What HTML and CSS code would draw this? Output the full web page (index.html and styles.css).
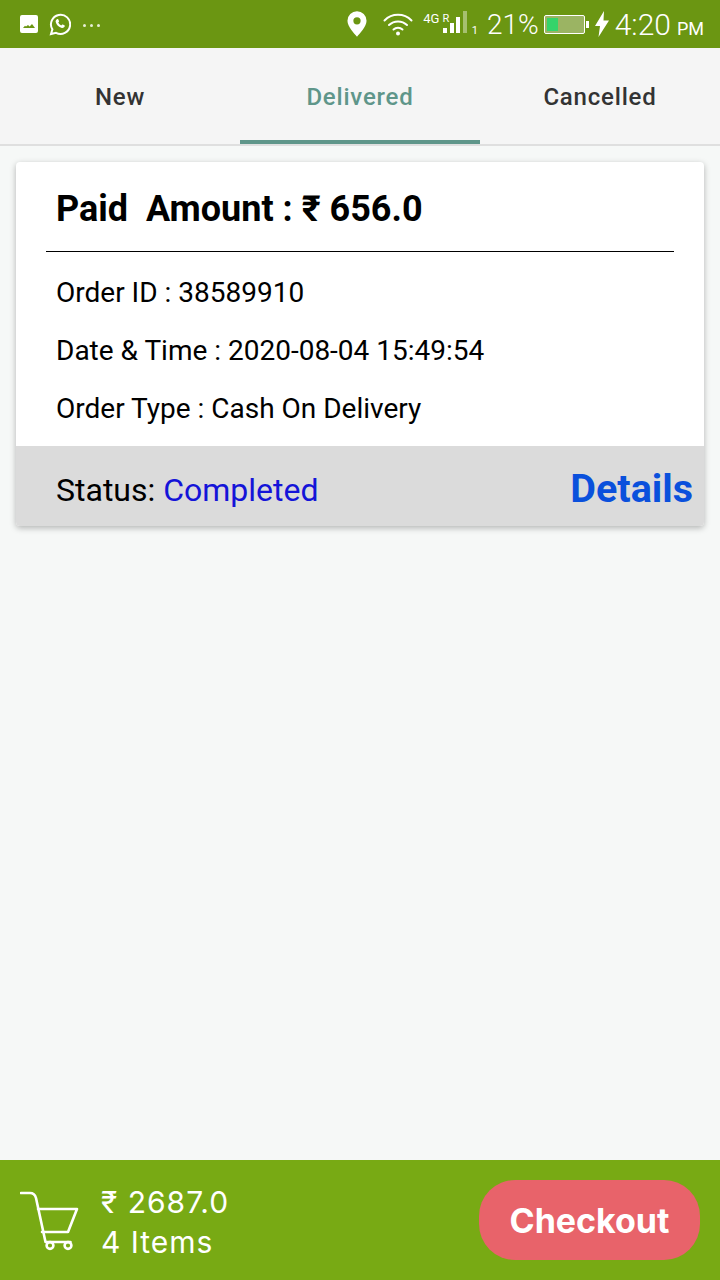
FILE: index.html
```html
<!DOCTYPE html>
<html lang="en">
<head>
  <meta charset="UTF-8" />
  <meta name="viewport" content="width=device-width, initial-scale=1.0" />
  <title>Orders</title>
  <link rel="stylesheet" href="styles.css">
</head>
<body>

  <!-- Status bar -->
  <div class="statusbar">
    <div class="status-left">
      <svg class="ic-image" width="18" height="18" viewBox="0 0 18 18">
        <path fill="#fff" fill-rule="evenodd" d="M2 0h14a2 2 0 0 1 2 2v14a2 2 0 0 1-2 2H2a2 2 0 0 1-2-2V2a2 2 0 0 1 2-2zM3 13h12l-3-4-2.400 2.600L8 10l-2 1.600-1-.8z"/>
      </svg>
      <svg class="ic-whatsapp" width="22" height="23" viewBox="0 0 22 23">
        <path fill="none" stroke="#fff" stroke-width="2" d="M2 21l1.400-4.600A9.600 9.600 0 1 1 7 19.800z"/>
        <path fill="#fff" d="M8 6.200c.5-.4 1.100-.3 1.300.2l.7 1.700c.1.300 0 .6-.2.800l-.6.700c.7 1.300 1.700 2.200 3 2.900l.8-.8c.2-.2.500-.3.800-.2l1.600.8c.4.200.5.700.3 1.200-.5 1.100-1.700 1.700-2.900 1.400-3.200-.8-5.400-3-6.100-5.900-.2-1.100.2-2.100 1.300-2.800z"/>
      </svg>
      <span class="dots"><i></i><i></i><i></i></span>
    </div>
    <div class="status-right">
      <svg class="ic-pin" width="20" height="26" viewBox="0 0 22 28">
        <path fill="#fff" fill-rule="evenodd" d="M11 0a10.500 10.500 0 0 1 10.500 10.500C21.500 17 14 24.500 11 28 8 24.500.5 17 .5 10.500A10.500 10.500 0 0 1 11 0zm0 6.500a4 4 0 1 0 0 8 4 4 0 0 0 0-8z"/>
      </svg>
      <svg class="ic-wifi" width="30" height="24" viewBox="0 0 30 24">
        <g fill="none" stroke="#fff" stroke-width="2" stroke-linecap="round">
          <path d="M1.500 8.500a19 19 0 0 1 27 0"/>
          <path d="M6 13a13 13 0 0 1 18 0"/>
          <path d="M10.500 17.500a6.500 6.500 0 0 1 9 0"/>
        </g>
        <circle cx="15" cy="21.500" r="2" fill="#fff"/>
      </svg>
      <span class="net"><span>4G</span><span class="roam">R</span></span>
      <span class="signal"><i class="b1"></i><i class="b2"></i><i class="b3"></i><i class="b4"></i></span>
      <span class="sim">1</span>
      <span class="batt-pct">21%</span>
      <span class="battery"><span class="battery-level"></span></span>
      <svg class="ic-bolt" width="14" height="26" viewBox="0 0 14 26">
        <path fill="#fff" d="M9 0L0 15h5l-1.500 11L14 9.500H8.500z"/>
      </svg>
      <span class="clock">4:20<small>PM</small></span>
    </div>
  </div>

  <!-- Tabs -->
  <div class="tabs">
    <div class="tab">New</div>
    <div class="tab active">Delivered</div>
    <div class="tab">Cancelled</div>
  </div>

  <div class="content">
    <div class="order-card">
      <div class="order-head">Paid&nbsp; Amount : ₹ 656.0</div>
      <div class="order-info">
        <p>Order ID : 38589910</p>
        <p>Date &amp; Time : 2020-08-04 15:49:54</p>
        <p>Order Type : Cash On Delivery</p>
      </div>
      <div class="order-foot">
        <div class="status">Status: <span>Completed</span></div>
        <a class="details">Details</a>
      </div>
    </div>
  </div>

  <!-- Cart bar -->
  <div class="cartbar">
    <div class="cart-left">
      <svg class="ic-cart" width="60" height="62" viewBox="0 0 60 62">
        <g fill="none" stroke="#fff" stroke-width="2.600" stroke-linecap="round" stroke-linejoin="round">
          <path d="M1 3h9c3 0 5 1.500 6 5l9.500 44h25"/>
          <path d="M18 19h39l-9 23H22"/>
          <circle cx="30" cy="55.500" r="3.400"/>
          <circle cx="48" cy="55.500" r="3.400"/>
        </g>
      </svg>
      <div class="cart-text">
        <div>₹ 2687.0</div>
        <div>4 Items</div>
      </div>
    </div>
    <button class="checkout">Checkout</button>
  </div>

</body>
</html>
```

FILE: styles.css
```css
* {
  box-sizing: border-box;
}

html, body {
  height: 100%;
}

body {
  margin: 0;
  display: flex;
  flex-direction: column;
  font-family: Roboto, 'Noto Sans', sans-serif;
  background-color: #f6f8f7;
  color: #000;
}

/* status bar */
.statusbar {
  height: 48px;
  flex: none;
  padding: 0 16px 0 20px;
  display: flex;
  align-items: center;
  justify-content: space-between;
  background-color: #6b9612;
  color: #fff;
}

.status-left, .status-right {
  display: flex;
  align-items: center;
}

.ic-whatsapp {
  margin-left: 11px;
}

.dots {
  display: flex;
  gap: 4px;
  margin-left: 12px;
  margin-top: 3px;
}

.dots i {
  width: 3px;
  height: 3px;
  border-radius: 50%;
  background: #e6eed6;
}

.ic-wifi {
  margin-left: 16px;
}

.net {
  display: flex;
  gap: 3px;
  align-self: flex-start;
  margin: 5px 0 0 10px;
  font-size: 13px;
  line-height: 14px;
}

.net .roam {
  font-size: 11px;
}

.signal {
  display: flex;
  align-items: flex-end;
  gap: 2.500px;
  height: 22px;
  margin: 0 0 4px -6px;
}

.signal i {
  width: 4px;
  background: #fff;
}

.signal .b1 { height: 5px; }
.signal .b2 { height: 10px; }
.signal .b3 { height: 16px; }
.signal .b4 { height: 22px; opacity: 0.4; }

.sim {
  align-self: flex-end;
  margin: 0 0 6px 5px;
  font-size: 11px;
  line-height: 11px;
}

.batt-pct {
  margin-left: 9px;
  font-size: 28px;
  font-weight: 300;
}

.battery {
  position: relative;
  width: 41px;
  height: 19px;
  margin-left: 5px;
  padding: 2px;
  border: 1px solid #fff;
  border-radius: 2px;
  background: #9bb463;
}

.battery::after {
  content: "";
  position: absolute;
  right: -5px;
  top: 5px;
  width: 3px;
  height: 7px;
  background: #fff;
}

.battery-level {
  display: block;
  width: 11px;
  height: 100%;
  background: #35d46a;
}

.ic-bolt {
  margin-left: 10px;
}

.clock {
  margin-left: 6px;
  font-size: 30px;
  font-weight: 300;
}

.clock small {
  margin-left: 6px;
  font-size: 18px;
  font-weight: 400;
}

/* tabs */
.tabs {
  height: 98px;
  flex: none;
  display: flex;
  background-color: #f5f5f5;
  border-bottom: 2px solid #dfdfdf;
}

.tab {
  position: relative;
  flex: 1;
  display: flex;
  align-items: center;
  justify-content: center;
  padding-top: 2px;
  font-size: 24px;
  font-weight: 500;
  letter-spacing: 0.8px;
  color: #333;
}

.tab.active {
  color: #5f968a;
}

.tab.active::after {
  content: "";
  position: absolute;
  left: 0;
  right: 0;
  bottom: 0;
  height: 4px;
  background: #5f968a;
}

/* order list */
.content {
  flex: 1;
  padding: 16px;
}

.order-card {
  background: #fff;
  border-radius: 4px;
  box-shadow: 0 2px 6px rgba(0, 0, 0, 0.28);
  overflow: hidden;
}

.order-head {
  margin: 0 30px;
  height: 90px;
  padding: 4px 10px 0;
  display: flex;
  align-items: center;
  border-bottom: 1px solid #000;
  font-size: 36px;
  font-weight: 700;
  white-space: pre;
}

.order-info {
  padding: 11px 40px 9px;
}

.order-info p {
  margin: 0;
  height: 58px;
  display: flex;
  align-items: center;
  font-size: 28px;
}

.order-foot {
  height: 80px;
  padding: 8px 11px 0 40px;
  display: flex;
  align-items: center;
  justify-content: space-between;
  background: #dbdbdb;
}

.status {
  font-size: 32px;
}

.status span {
  color: #1414d8;
}

.details {
  margin-bottom: 4px;
  font-size: 39.500px;
  font-weight: 700;
  color: #0a50dc;
}

/* cart bar */
.cartbar {
  height: 120px;
  flex: none;
  padding: 0 20px;
  display: flex;
  align-items: center;
  justify-content: space-between;
  background-color: #78aa14;
  color: #fff;
}

.cart-left {
  display: flex;
  align-items: center;
  gap: 21px;
}

.ic-cart {
  margin-top: 2px;
}

.cart-text {
  padding-top: 3px;
  font-family: Inter, 'Noto Sans', sans-serif;
  font-size: 30px;
  line-height: 40px;
  letter-spacing: 1px;
}

.checkout {
  width: 221px;
  height: 80px;
  border: none;
  border-radius: 36px;
  background-color: #e8636a;
  color: #fff;
  font-family: Inter, 'Noto Sans', sans-serif;
  font-size: 34px;
  font-weight: 700;
}
```
